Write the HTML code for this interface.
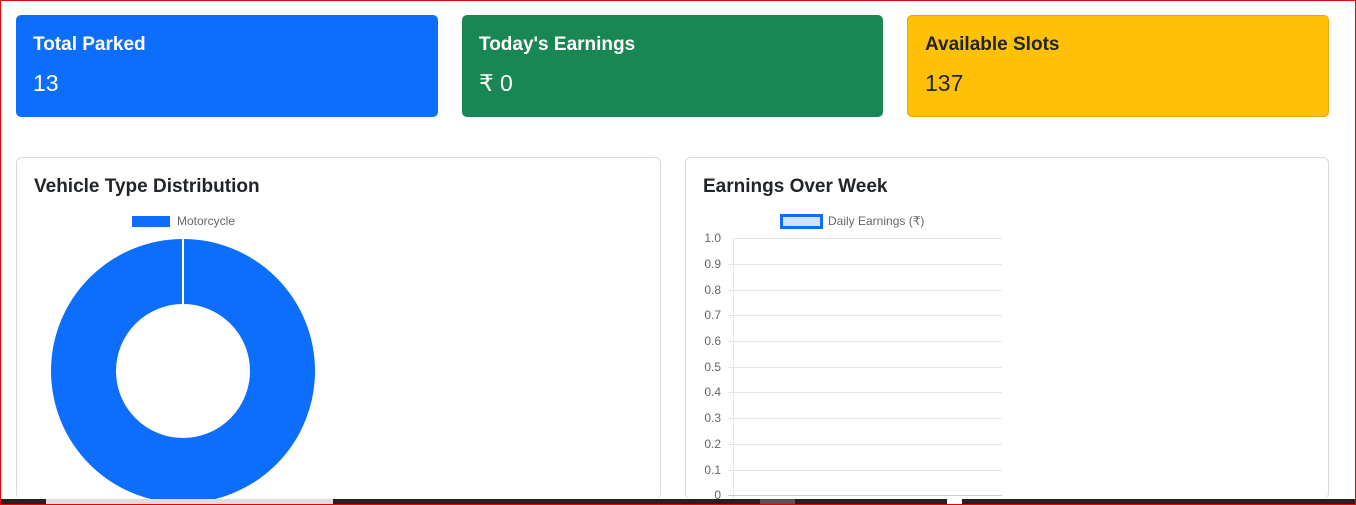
<!DOCTYPE html><html style="overflow:hidden;height:505px"><head><style>
body{margin:0;width:1356px;height:505px;overflow:hidden;background:#fff;font-family:"Liberation Sans",sans-serif;position:relative}
.frame{position:absolute;left:0;top:0;width:1356px;height:505px;border:1px solid #e00;box-sizing:border-box;pointer-events:none;z-index:5}
.c{position:absolute;border-radius:5px;box-sizing:border-box}
.c h5{margin:0;position:absolute;left:17px;top:19px;font-size:19px;font-weight:600}
.c .v{position:absolute;left:17px;top:55px;font-size:23px}
.p{position:absolute;border:1px solid #d9d9d9;border-radius:6px;top:157px;height:342px;border-bottom:none;box-sizing:border-box}
.p h5{margin:0;position:absolute;left:17px;top:18px;font-size:19px;font-weight:600;color:#212529}
</style></head><body>
<div class="c" style="left:16px;top:15px;width:422px;height:102px;background:#0d6efd;color:#fff"><h5>Total Parked</h5><div class="v">13</div></div>
<div class="c" style="left:462px;top:15px;width:421px;height:102px;background:#198754;color:#fff"><h5>Today's Earnings</h5><div class="v">₹ 0</div></div>
<div class="c" style="left:907px;top:15px;width:422px;height:102px;background:#ffc107;color:#212529;border:1px solid #e0a800"><h5 style="left:17px;top:18px">Available Slots</h5><div class="v" style="top:54px">137</div></div>
<div class="p" style="left:16px;width:645px"><h5>Vehicle Type Distribution</h5></div>
<div class="p" style="left:685px;width:644px"><h5>Earnings Over Week</h5></div>
<svg style="position:absolute;left:0;top:0" width="1356" height="505" font-family="Liberation Sans,sans-serif" font-size="12" fill="#666">
<rect x="132" y="216" width="38" height="11" fill="#0d6efd"/><text x="177" y="225">Motorcycle</text>
<circle cx="183" cy="371" r="99.5" fill="none" stroke="#0d6efd" stroke-width="65"/>
<line x1="183" y1="239" x2="183" y2="305" stroke="#fff" stroke-width="2"/>
<rect x="781.5" y="215.5" width="40" height="12" fill="#cfe2ff" stroke="#0d6efd" stroke-width="3"/><text x="828" y="225">Daily Earnings (₹)</text>
<g stroke="#e5e5e5"><line x1="733" y1="238.5" x2="1002" y2="238.5"/><line x1="728" y1="264.5" x2="1002" y2="264.5"/><line x1="728" y1="290.5" x2="1002" y2="290.5"/><line x1="728" y1="315.5" x2="1002" y2="315.5"/><line x1="728" y1="341.5" x2="1002" y2="341.5"/><line x1="728" y1="367.5" x2="1002" y2="367.5"/><line x1="728" y1="392.5" x2="1002" y2="392.5"/><line x1="728" y1="418.5" x2="1002" y2="418.5"/><line x1="728" y1="444.5" x2="1002" y2="444.5"/><line x1="728" y1="470.5" x2="1002" y2="470.5"/><line x1="733.5" y1="238" x2="733.5" y2="500"/></g>
<line x1="728" y1="495.5" x2="1002" y2="495.5" stroke="#ccc"/>
<g text-anchor="end"><text x="721" y="242">1.0</text><text x="721" y="268">0.9</text><text x="721" y="294">0.8</text><text x="721" y="319">0.7</text><text x="721" y="345">0.6</text><text x="721" y="371">0.5</text><text x="721" y="396">0.4</text><text x="721" y="422">0.3</text><text x="721" y="448">0.2</text><text x="721" y="474">0.1</text><text x="721" y="499">0</text></g>
<rect x="0" y="499" width="1356" height="6" fill="#222"/>
<rect x="46" y="499" width="287" height="6" fill="#ddd"/>
<rect x="760" y="499" width="35" height="6" fill="#555"/>
<rect x="947" y="499" width="15" height="6" fill="#fff"/>
</svg>
<div class="frame"></div>
</body></html>
